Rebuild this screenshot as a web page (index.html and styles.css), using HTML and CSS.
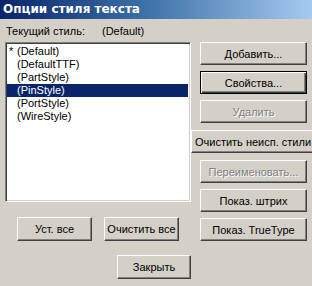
FILE: index.html
```html
<!DOCTYPE html>
<html>
<head>
<meta charset="utf-8">
<link rel="stylesheet" href="styles.css">
</head>
<body>
<div class="dialog">
  <div class="titlebar">Опции стиля текста</div>
  <div class="content">
    <div class="left">
      <div class="current"><span class="cur-label">Текущий стиль:</span><span class="cur-value">(Default)</span></div>
      <div class="listbox">
        <div class="item"><span class="mark">*</span>(Default)</div>
        <div class="item"><span class="mark"></span>(DefaultTTF)</div>
        <div class="item"><span class="mark"></span>(PartStyle)</div>
        <div class="item selected"><span class="mark"></span>(PinStyle)</div>
        <div class="item"><span class="mark"></span>(PortStyle)</div>
        <div class="item"><span class="mark"></span>(WireStyle)</div>
      </div>
      <div class="bottom-row">
        <div class="btn small">Уст. все</div>
        <div class="btn small">Очистить все</div>
      </div>
      <div class="close-row">
        <div class="btn small">Закрыть</div>
      </div>
    </div>
    <div class="right">
      <div class="btn">Добавить...</div>
      <div class="btn default">Свойства...</div>
      <div class="btn disabled">Удалить</div>
      <div class="btn wide">Очистить неисп. стили</div>
      <div class="btn disabled">Переименовать...</div>
      <div class="btn">Показ. штрих</div>
      <div class="btn">Показ. TrueType</div>
    </div>
  </div>
</div>
</body>
</html>
```
FILE: styles.css
```css
html, body {
  margin: 0;
  padding: 0;
  background: #d4d0c8;
  overflow: hidden;
}
body {
  width: 312px;
  height: 286px;
  font-family: "Liberation Sans", Arial, sans-serif;
  font-size: 11px;
  color: #000;
}
.titlebar {
  height: 19px;
  line-height: 19px;
  padding-left: 3px;
  color: #fff;
  font-family: "DejaVu Sans", sans-serif;
  font-weight: bold;
  font-size: 12px;
  background: linear-gradient(to right, #0a246a 0%, #3a6ea5 45%, #a6caf0 100%);
}
.content {
  display: flex;
  align-items: flex-start;
}
.left {
  width: 186px;
  margin-left: 5px;
  display: flex;
  flex-direction: column;
}
.current {
  height: 23px;
  display: flex;
  align-items: center;
  padding-left: 1px;
}
.cur-label {
  width: 96px;
}
.listbox {
  height: 156px;
  background: #fff;
  border-top: 1px solid #808080;
  border-left: 1px solid #808080;
  border-right: 1px solid #fff;
  border-bottom: 1px solid #fff;
  box-shadow: inset 1px 1px 0 #404040, inset -1px -1px 0 #d4d0c8;
  padding: 2px 2px 0 1px;
}
.item {
  height: 13px;
  line-height: 13px;
  padding-left: 2px;
  display: flex;
  white-space: nowrap;
}
.mark {
  width: 8px;
}
.item.selected {
  background: #0a246a;
  color: #fff;
}
.btn {
  height: 23px;
  box-sizing: border-box;
  display: flex;
  align-items: center;
  justify-content: center;
  white-space: nowrap;
  background: #d4d0c8;
  border-top: 1px solid #fff;
  border-left: 1px solid #fff;
  border-right: 1px solid #404040;
  border-bottom: 1px solid #404040;
  box-shadow: inset -1px -1px 0 #808080;
}
.btn.default {
  border: 1px solid #000;
  box-shadow: inset 1px 1px 0 #fff, inset -1px -1px 0 #404040, inset -2px -2px 0 #808080;
}
.btn.disabled {
  color: #808080;
  text-shadow: 1px 1px 0 #fff;
}
.right {
  margin-left: 9px;
  padding-top: 23px;
  width: 107px;
  display: flex;
  flex-direction: column;
  gap: 6px;
}
.btn.wide {
  margin-left: -9px;
  width: 124px;
  margin-top: 1px;
  margin-bottom: 1px;
}
.bottom-row {
  display: flex;
  gap: 12px;
  padding-left: 12px;
  margin-top: 15px;
}
.bottom-row .btn {
  width: 75px;
  height: 24px;
}
.close-row {
  display: flex;
  padding-left: 112px;
  margin-top: 14px;
}
.close-row .btn {
  width: 76px;
  height: 24px;
}
```
